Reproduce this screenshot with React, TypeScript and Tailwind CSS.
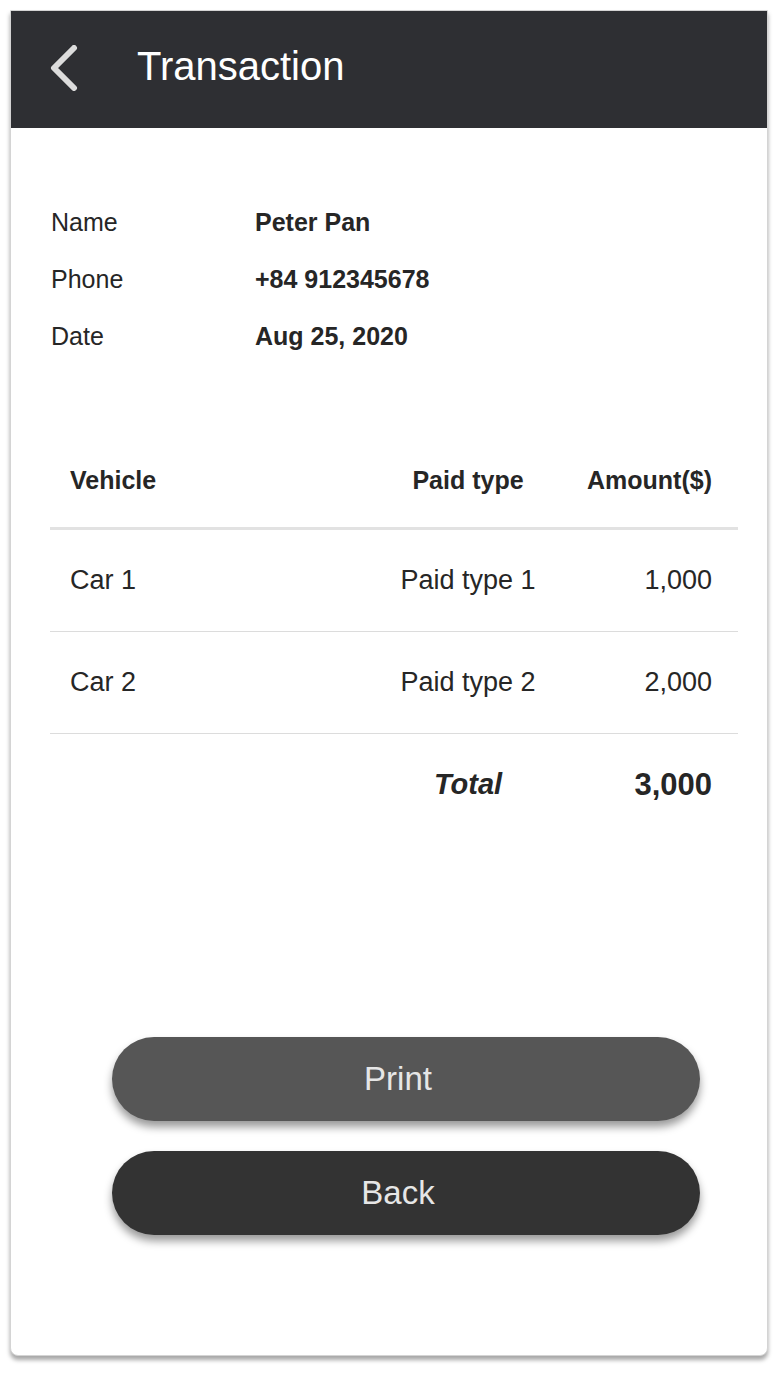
import React from 'react';

const rows = [
  { vehicle: 'Car 1', type: 'Paid type 1', amount: '1,000' },
  { vehicle: 'Car 2', type: 'Paid type 2', amount: '2,000' },
];

const info = [
  { label: 'Name', value: 'Peter Pan' },
  { label: 'Phone', value: '+84 912345678' },
  { label: 'Date', value: 'Aug 25, 2020' },
];

const App: React.FC = () => {
  return (
    <div className="min-h-screen bg-white pt-[10px] font-['Liberation_Sans',Arial,sans-serif] text-[#262626]">
      <div className="mx-[10px] w-[758px] h-[1346px] flex flex-col bg-white border border-[#d4d4d4] rounded-b-lg shadow-[0_4px_4px_rgba(0,0,0,0.35)] overflow-hidden">
        {/* header */}
        <header className="h-[117px] shrink-0 bg-[#2e2f33] flex items-center">
          <button className="ml-[37px] mb-[4px] w-[32px] h-[48px] flex items-center justify-center">
            <svg width="30" height="46" viewBox="0 0 30 46" fill="none">
              <polyline points="25,3 5,23 25,43" stroke="#dcdcdc" strokeWidth="6" strokeLinecap="round" strokeLinejoin="round" />
            </svg>
          </button>
          <h1 className="ml-[57px] mb-[7px] text-[40px] text-white leading-none">Transaction</h1>
        </header>

        {/* customer info */}
        <div className="pt-[66px] pl-[40px]">
          {info.map((item) => (
            <div key={item.label} className="h-[57px] flex items-center text-[25px]">
              <span className="w-[204px]">{item.label}</span>
              <span className="font-bold">{item.value}</span>
            </div>
          ))}
        </div>

        {/* table */}
        <div className="mt-[69px] ml-[39px] mr-[29px]">
          <div className="h-[96px] flex items-center border-b-[3px] border-[#e2e2e2] text-[25px] font-bold">
            <span className="flex-1 pl-[20px]">Vehicle</span>
            <span className="w-[170px] text-center">Paid type</span>
            <span className="w-[185px] text-right pr-[26px]">Amount($)</span>
          </div>
          {rows.map((r) => (
            <div key={r.vehicle} className="h-[102px] flex items-center border-b border-[#dcdcdc] text-[27px]">
              <span className="flex-1 pl-[20px]">{r.vehicle}</span>
              <span className="w-[170px] text-center">{r.type}</span>
              <span className="w-[185px] text-right pr-[26px]">{r.amount}</span>
            </div>
          ))}
          <div className="h-[102px] flex items-center">
            <span className="flex-1" />
            <span className="w-[170px] text-center text-[29px] font-bold italic">Total</span>
            <span className="w-[185px] text-right pr-[26px] text-[31px] font-bold">3,000</span>
          </div>
        </div>

        {/* actions */}
        <div className="mt-auto mb-[120px] ml-[101px] w-[588px] flex flex-col gap-[30px]">
          <button className="h-[84px] pr-[16px] rounded-full bg-[#565656] text-[#e6e6e6] text-[33px] shadow-[0_6px_8px_rgba(0,0,0,0.4)]">
            Print
          </button>
          <button className="h-[84px] pr-[16px] rounded-full bg-[#333333] text-[#e6e6e6] text-[33px] shadow-[0_6px_8px_rgba(0,0,0,0.4)]">
            Back
          </button>
        </div>
      </div>
    </div>
  );
};

export default App;
